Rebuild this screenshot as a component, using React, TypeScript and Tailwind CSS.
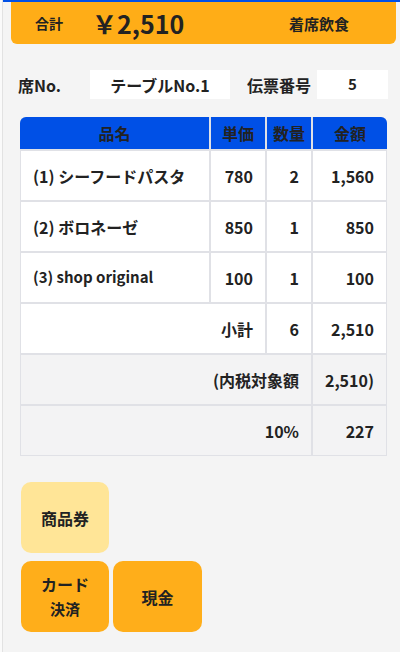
import React from "react";

const font = { fontFamily: '"Noto Sans CJK JP", "Noto Sans", sans-serif' };

export default function App() {
  return (
    <div className="w-[400px] h-[652px] bg-[#fafafa] pl-[2px] text-[#222] font-bold" style={font}>
      <div className="h-full border-l border-[#e2e2e2] bg-[#f4f4f4] flex flex-col">
        <div className="h-[2px] bg-[#0050e6]" />
        {/* header */}
        <div className="ml-[8px] mr-[4px] h-[42px] bg-[#ffad17] rounded-b-[6px] flex items-center">
          <span className="ml-[24px] text-[14px] leading-none">合計</span>
          <span className="ml-[29px] text-[25px] leading-none">￥2,510</span>
          <span className="ml-auto mr-[47px] text-[15px] leading-none">着席飲食</span>
        </div>
        {/* row 2 */}
        <div className="mt-[26px] flex items-center h-[29px]">
          <span className="ml-[15px] w-[72px] text-[16px]">席No.</span>
          <div className="w-[140px] h-[29px] bg-white flex items-center justify-center text-[16px]">テーブルNo.1</div>
          <span className="ml-[17px] text-[16px]">伝票番号</span>
          <div className="ml-[6px] w-[71px] h-[29px] bg-white flex items-center justify-center text-[15px]">5</div>
        </div>
        {/* table */}
        <div className="mt-[18px] ml-[17px] w-[367px]">
          <div className="grid grid-cols-[189px_54px_44px_74px] gap-x-[2px] bg-[#e0e1e6] rounded-t-[6px] h-[32px] text-[16px]">
            <div className="bg-[#0050e6] rounded-tl-[6px] flex items-center justify-center">品名</div>
            <div className="bg-[#0050e6] flex items-center justify-center">単価</div>
            <div className="bg-[#0050e6] flex items-center justify-center">数量</div>
            <div className="bg-[#0050e6] rounded-tr-[6px] flex items-center justify-center">金額</div>
          </div>
          <div className="border border-t-0 border-[#e0e1e6] bg-[#e0e1e6] pt-[2px] grid grid-cols-[188px_54px_44px_73px] auto-rows-[49px] gap-[2px] text-[16px]">
            <div className="bg-white flex items-center pl-[12px]">(1) シーフードパスタ</div>
            <div className="bg-white flex items-center justify-end pr-[12px]">780</div>
            <div className="bg-white flex items-center justify-end pr-[12px]">2</div>
            <div className="bg-white flex items-center justify-end pr-[12px]">1,560</div>

            <div className="bg-white flex items-center pl-[12px]">(2) ボロネーゼ</div>
            <div className="bg-white flex items-center justify-end pr-[12px]">850</div>
            <div className="bg-white flex items-center justify-end pr-[12px]">1</div>
            <div className="bg-white flex items-center justify-end pr-[12px]">850</div>

            <div className="bg-white flex items-center pl-[12px] text-[15px]">(3) shop original</div>
            <div className="bg-white flex items-center justify-end pr-[12px]">100</div>
            <div className="bg-white flex items-center justify-end pr-[12px]">1</div>
            <div className="bg-white flex items-center justify-end pr-[12px]">100</div>

            <div className="col-span-2 bg-white flex items-center justify-end pr-[12px]">小計</div>
            <div className="bg-white flex items-center justify-end pr-[12px]">6</div>
            <div className="bg-white flex items-center justify-end pr-[12px]">2,510</div>

            <div className="col-span-3 bg-[#f3f3f4] flex items-center justify-end pr-[12px]">(内税対象額</div>
            <div className="bg-[#f3f3f4] flex items-center justify-end pr-[12px]">2,510)</div>

            <div className="col-span-3 bg-[#f3f3f4] flex items-center justify-end pr-[12px]">10%</div>
            <div className="bg-[#f3f3f4] flex items-center justify-end pr-[12px]">227</div>
          </div>
        </div>
        {/* buttons */}
        <div className="mt-[26px] ml-[18px] flex flex-col gap-[8px]">
          <div className="w-[88px] h-[71px] rounded-[10px] bg-[#ffe597] flex items-center justify-center text-[16px]">商品券</div>
          <div className="flex gap-[4px]">
            <div className="w-[88px] h-[71px] rounded-[10px] bg-[#ffae1a] flex flex-col items-center justify-center leading-[1.65]">
              <span className="text-[16px]">カード</span>
              <span className="text-[15px]">決済</span>
            </div>
            <div className="w-[89px] h-[71px] rounded-[10px] bg-[#ffae1a] flex items-center justify-center text-[16px]">現金</div>
          </div>
        </div>
      </div>
    </div>
  );
}
